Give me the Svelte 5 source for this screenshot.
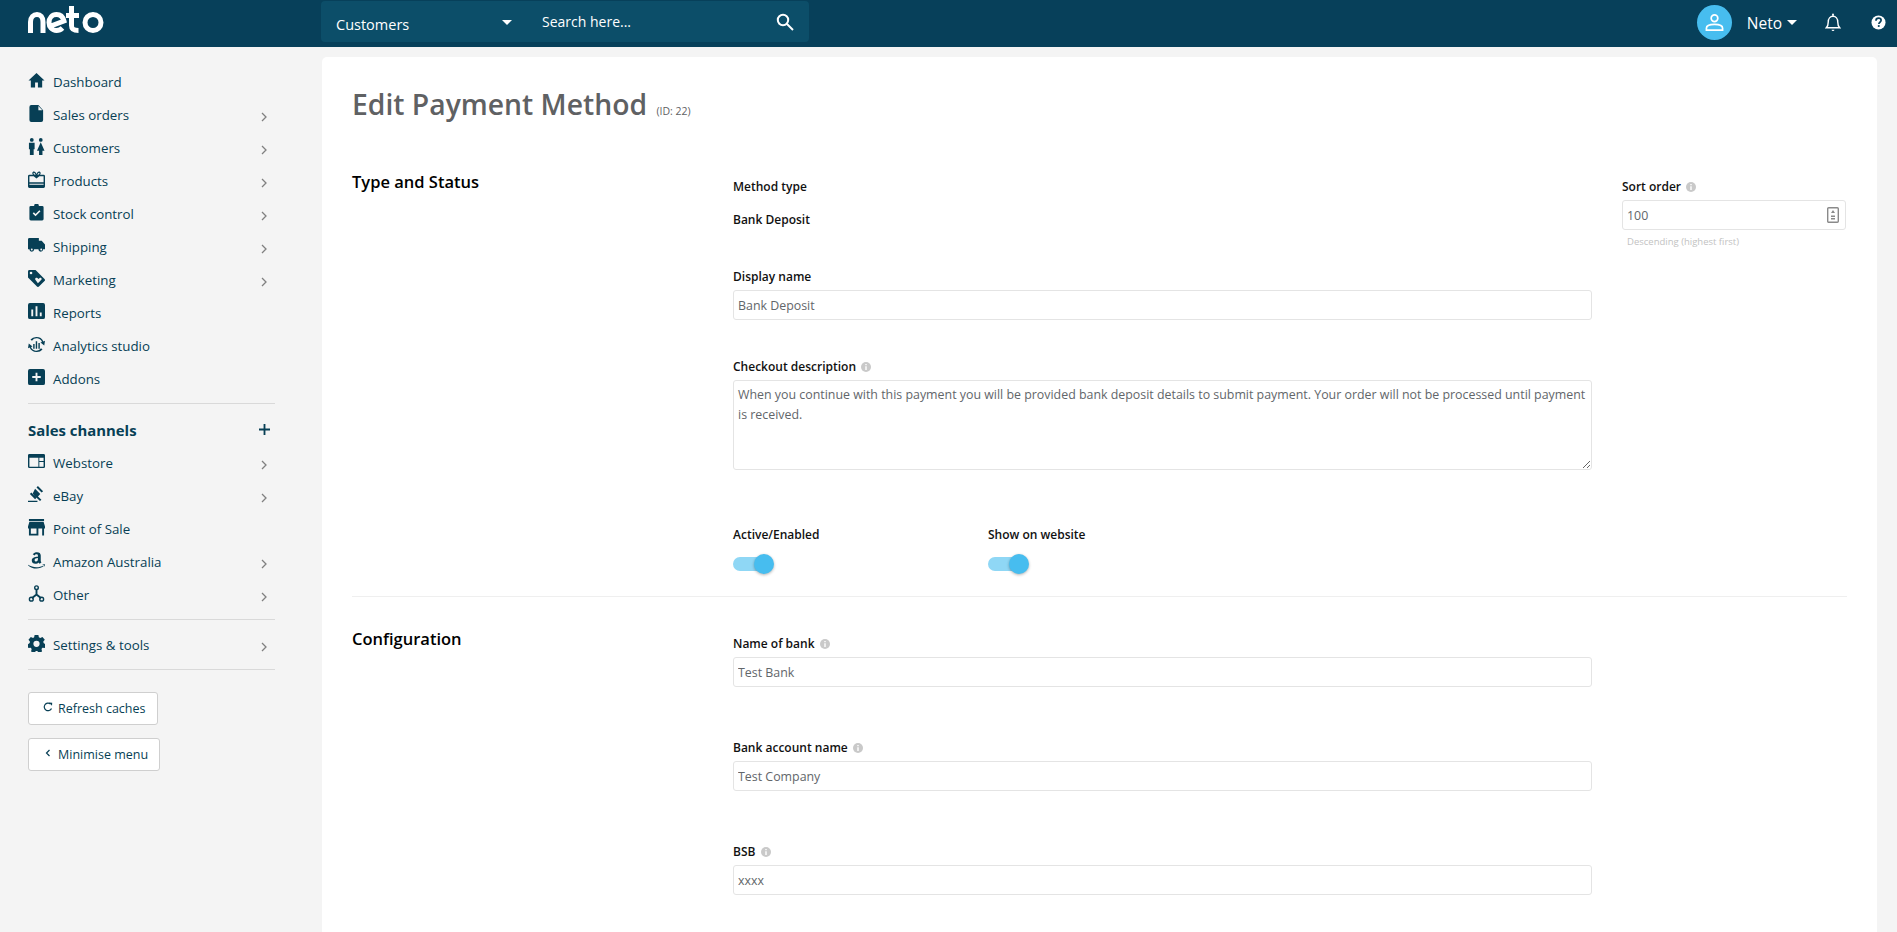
<script>
  const top = [
    { label: 'Dashboard', icon: 'home' },
    { label: 'Sales orders', icon: 'doc', more: true },
    { label: 'Customers', icon: 'people', more: true },
    { label: 'Products', icon: 'gift', more: true },
    { label: 'Stock control', icon: 'clip', more: true },
    { label: 'Shipping', icon: 'truck', more: true },
    { label: 'Marketing', icon: 'tag', more: true },
    { label: 'Reports', icon: 'bars' },
    { label: 'Analytics studio', icon: 'studio' },
    { label: 'Addons', icon: 'plus' }
  ];
  const channels = [
    { label: 'Webstore', icon: 'web', more: true },
    { label: 'eBay', icon: 'gavel', more: true },
    { label: 'Point of Sale', icon: 'store' },
    { label: 'Amazon Australia', icon: 'amazon', more: true },
    { label: 'Other', icon: 'nodes', more: true }
  ];
  const config = [
    { label: 'Name of bank', value: 'Test Bank' },
    { label: 'Bank account name', value: 'Test Company' },
    { label: 'BSB', value: 'xxxx' }
  ];
</script>

{#snippet icon(name)}
  <svg class="nav-icon" viewBox="0 0 18 18" aria-hidden="true">
    {#if name === 'home'}
      <path d="M9 1 0.5 9H3v7.5h4.5V11h3v5.5H15V9h2.5z" />
    {:else if name === 'doc'}
      <path d="M3.5 0H11l5 5.500V16a2 2 0 0 1-2 2H3.500a2 2 0 0 1-2-2V2a2 2 0 0 1 2-2zM11 1v4.500h4.200z" fill-rule="evenodd" />
    {:else if name === 'people'}
      <circle cx="4" cy="2" r="2" /><circle cx="13.500" cy="2" r="2" />
      <path d="M1 5h6v7H6v6H2v-6H1zM13.500 4.500l4 9h-2.200V18h-3.600v-4.500H9.500z" />
    {:else if name === 'gift'}
      <path fill-rule="evenodd" d="M1.500 4H5.500C4 3 4.500.5 6.200.5 7.500.5 8.500 2 9 3.200 9.500 2 10.500.5 11.800.500 13.500.5 14 3 12.500 4h4A1.500 1.500 0 0 1 18 5.500v11a1.500 1.500 0 0 1-1.500 1.500h-15A1.500 1.500 0 0 1 0 16.500v-11A1.500 1.500 0 0 1 1.500 4zM1.500 5.500V12h15V5.500H12L9 8 6 5.500zM1.500 13.500v1h15v-1zM6.300 1.800c-.6 0-.7 1.200.2 1.900L8 4C7.700 3 7 1.800 6.300 1.800zM11.700 1.800C11 1.800 10.300 3 10 4l1.500-.3c.9-.7.800-1.900.2-1.900z" />
    {:else if name === 'clip'}
      <path fill-rule="evenodd" d="M3 2h3.500a2.500 2.500 0 0 1 5 0H15a1.500 1.500 0 0 1 1.500 1.500V16a1.500 1.500 0 0 1-1.500 1.500H3A1.500 1.500 0 0 1 1.500 16V3.500A1.500 1.500 0 0 1 3 2zM5 10l1.200-1.200 1.800 1.800 4-4L13.200 7.800 8 13z" />
    {:else if name === 'truck'}
      <path d="M0 2.500A1.500 1.500 0 0 1 1.500 1h10v3h3l3.500 4v5h-2a2.500 2.500 0 0 1-5 0H6.500a2.500 2.500 0 0 1-5 0H0z" /><circle cx="4" cy="13.200" r="1" fill="#f4f4f4" /><circle cx="14" cy="13.200" r="1" fill="#f4f4f4" />
    {:else if name === 'tag'}
      <path fill-rule="evenodd" d="M0 1.500A1.500 1.500 0 0 1 1.500 0H8l9.500 9.500a1.500 1.500 0 0 1 0 2.100L11.600 17.500a1.500 1.500 0 0 1-2.100 0L0 8zM3.200 1.800a1.400 1.400 0 1 0 0 2.800 1.400 1.400 0 0 0 0-2.800zM10.500 14l3.600-3.600c1-1.100-.5-2.900-2-1.700L11 9.500l-1-.9C8.400 7.500 7 9.200 7.800 10.400z" />
    {:else if name === 'bars'}
      <path fill-rule="evenodd" d="M2 0h14a2 2 0 0 1 2 2v13a2 2 0 0 1-2 2H2a2 2 0 0 1-2-2V2a2 2 0 0 1 2-2zM3.500 7v7H5.500V7zM8 3.500V14h2V3.500zM12.500 10v4h2v-4z" />
    {:else if name === 'studio'}
      <path d="M9 1a8 8 0 0 1 7.300 4.700L18 5l-.8 5-4-3 1.600-.6A6 6 0 0 0 4.200 5L2.600 3.800A8 8 0 0 1 9 1zM9 17a8 8 0 0 1-7.300-4.700L0 13l.8-5 4 3-1.600.6A6 6 0 0 0 13.800 13l1.600 1.200A8 8 0 0 1 9 17z" /><path d="M5.500 8.500h1.500v5H5.500zM8.200 5.500h1.500v8H8.200zM11 7.500h1.500v6H11z" />
    {:else if name === 'plus'}
      <path fill-rule="evenodd" d="M2 0h14a2 2 0 0 1 2 2v13a2 2 0 0 1-2 2H2a2 2 0 0 1-2-2V2a2 2 0 0 1 2-2zM8 4v3.500H4.500v2H8V13h2V9.500h3.500v-2H10V4z" />
    {:else if name === 'web'}
      <path fill-rule="evenodd" d="M1.500 1h15A1.500 1.500 0 0 1 18 2.500v12a1.500 1.500 0 0 1-1.500 1.500h-15A1.500 1.500 0 0 1 0 14.500v-12A1.500 1.500 0 0 1 1.500 1zM1.500 5v9.500h9.500V5zM12 5v3.500h4.500V5zM12 9.500v5h4.500v-5z" />
    {:else if name === 'gavel'}
      <path d="M10.500 0l5.500 5.500-1.600 1.500-5.400-5.500zM7.500 3l5.500 5.500-2.500 2.500-1.800-1.700 5.500 5.200-1.500 1.500-5.500-5.300L5 8zM3.500 7l5.500 5.500-1.500 1.500L2 8.500zM0 15.500h10V17H0z" />
    {:else if name === 'store'}
      <path fill-rule="evenodd" d="M1 0h16v2H1zM1.500 3h15L18 8v2H17v7.500H1V10H0V8zM3 10v5.500h6V10zM11 10v7.500h4V10z" />
    {:else if name === 'amazon'}
      <path fill-rule="evenodd" d="M5 2.500C6 .8 8 .2 9.500.2c2.500 0 4 1.300 4 3.500v5.500c0 .8.300 1.200.8 1.700l-1.800 1.600c-.6-.5-1-1-1.300-1.500-.9 1.100-2 1.500-3.400 1.500-2.200 0-3.800-1.300-3.800-3.500 0-2.800 2.700-3.800 6.500-4V3.800c0-1-.6-1.500-1.600-1.500-.9 0-1.500.5-1.800 1.300zM10.500 6.300c-2.200.1-3.500.7-3.500 2.100 0 1 .6 1.600 1.500 1.600 1.400 0 2-1.200 2-2.500zM0 13.500c5 3.300 12 3.300 16.300.7l.5.4C13 18.500 4.500 18.800 0 14zM15 13.300c1-.4 2.500-.4 3 0 0 1-.6 2-1.300 2.600l.4-2.100z" />
    {:else if name === 'nodes'}
      <path fill="none" stroke="#073f55" stroke-width="2" d="M9 5v5L4 14M9 10l5 4" /><circle cx="9" cy="2.800" r="1.900" fill="none" stroke="#073f55" stroke-width="1.500" /><circle cx="3.500" cy="15" r="2" fill="none" stroke="#073f55" stroke-width="1.500" /><circle cx="14.500" cy="15" r="2" fill="none" stroke="#073f55" stroke-width="1.500" />
    {:else if name === 'gear'}
      <path fill-rule="evenodd" d="M7 0h4l.5 2.500 1.500.7L15.300 2l2.500 3-1.600 2 .3 1.500L18.700 10l-.8 3.800-2.600-.2-1 1.300.6 2.500-3.500 1.700-1.500-2.100H8.300l-1.600 2.100-3.500-1.700.7-2.500-1-1.300-2.600.2L-.5 10l2.300-1.500L2 7 .5 5 3 2l2.300 1.200 1.200-.7zM9 6a3.300 3.300 0 1 0 0 6.600A3.300 3.300 0 0 0 9 6z" />
    {/if}
  </svg>
{/snippet}

{#snippet navRow(item)}
  <li class="nav-row">
    {@render icon(item.icon)}
    <span class="nav-label">{item.label}</span>
    {#if item.more}
      <svg class="chev" viewBox="0 0 7 10"><path d="M1 1l4 4-4 4" /></svg>
    {/if}
  </li>
{/snippet}

{#snippet info()}
  <svg class="info" viewBox="0 0 10 10" aria-hidden="true">
    <circle cx="5" cy="5" r="5" fill="#c9c9c9" />
    <path d="M4.300 2h1.400v1.300H4.300zM4.300 4.200h1.400V8H4.300z" fill="#fff" />
  </svg>
{/snippet}

<div class="page">
  <header class="topbar">
    <svg class="logo" viewBox="0 0 78 28" aria-label="neto">
      <g fill="none" stroke="#fff" stroke-width="5">
        <path d="M2.500 27V16c0-5 3-7.500 6.500-7.500s6 2.500 6 7.500v11" />
        <path d="M21.500 20.500 36 15C35 11 32 8.500 28.500 8.500c-4.500 0-7.500 3.500-7.500 8s3 8 7.500 8c2.500 0 4.500-1 6-2.500" />
        <path d="M43.500 0v19.500c0 3.500 2 5 7 5M38 9.500h13" />
        <circle cx="65" cy="16.500" r="8" />
      </g>
    </svg>
    <div class="finder">
      <div class="scope">
        <span>Customers</span>
        <span class="caret"></span>
      </div>
      <div class="search">
        <span>Search here...</span>
        <svg class="search-icon" viewBox="0 0 18 18"><circle cx="7" cy="7" r="5.200" /><path d="M11 11l6 6" /></svg>
      </div>
    </div>
    <div class="account">
      <span class="avatar">
        <svg viewBox="0 0 20 20"><circle cx="10" cy="5.500" r="3.500" /><path d="M1.500 18v-2c0-2.500 3-4 8.500-4s8.500 1.500 8.500 4v2z" /></svg>
      </span>
      <span class="user">Neto</span>
      <span class="caret user-caret"></span>
      <svg class="bell" viewBox="0 0 16 20"><path d="M1 15.500c1.500-1.500 2-3 2-6 0-3.500 2-6 5-6s5 2.500 5 6c0 3 .5 4.500 2 6z" /><path class="solid" d="M6.500 17.500h3a1.500 1.500 0 0 1-3 0zM7 1.500a1 1 0 0 1 2 0V3H7z" /></svg>
      <svg class="help" viewBox="0 0 16 16"><circle cx="8" cy="8" r="7.500" fill="#fff" /><path d="M5.300 6c0-1.700 1.200-2.600 2.800-2.600s2.700.9 2.700 2.300c0 2-2.400 2-2.400 3.800" fill="none" stroke="#07405a" stroke-width="1.800" /><rect x="7.300" y="10.800" width="1.900" height="1.900" fill="#07405a" /></svg>
    </div>
  </header>

  <div class="body">
    <nav class="sidebar">
      <ul class="nav">
        {#each top as item}{@render navRow(item)}{/each}
      </ul>
      <hr />
      <div class="channels">
        <span>Sales channels</span>
        <svg class="add" viewBox="0 0 12 12"><path d="M6 0v12M0 6h12" /></svg>
      </div>
      <ul class="nav">
        {#each channels as item}{@render navRow(item)}{/each}
      </ul>
      <hr class="tight" />
      <ul class="nav">
        {@render navRow({ label: 'Settings & tools', icon: 'gear', more: true })}
      </ul>
      <hr class="tight" />
      <button class="side-btn first">
        <svg viewBox="0 0 10 10"><path d="M8.500 6.500A3.800 3.800 0 1 1 7.500 2" /><path class="solid" d="M6 .5l3.200.2L9 3.800z" /></svg>
        Refresh caches
      </button>
      <button class="side-btn">
        <svg viewBox="0 0 10 10"><path d="M6.500 2 3.500 5l3 3" /></svg>
        Minimise menu
      </button>
    </nav>

    <main class="card">
      <h1>Edit Payment Method <small>(ID: 22)</small></h1>

      <section class="section status">
        <h2>Type and Status</h2>
        <div class="fields">
          <p class="label">Method type</p>
          <p class="label static">Bank Deposit</p>
          <label class="label name-label" for="display">Display name</label>
          <input id="display" class="input" value="Bank Deposit" />
          <p class="label desc-label">Checkout description {@render info()}</p>
          <textarea class="input area" rows="3">When you continue with this payment you will be provided bank deposit details to submit payment. Your order will not be processed until payment is received.</textarea>
          <div class="toggles">
            <div class="toggle-field">
              <p class="label">Active/Enabled</p>
              <span class="toggle"><span class="knob"></span></span>
            </div>
            <div class="toggle-field">
              <p class="label">Show on website</p>
              <span class="toggle"><span class="knob"></span></span>
            </div>
          </div>
        </div>
        <aside class="sort">
          <p class="label">Sort order {@render info()}</p>
          <div class="input sort-input">
            <span>100</span>
            <svg viewBox="0 0 12 16"><rect x=".7" y=".7" width="10.600" height="14.600" rx="1" fill="none" stroke="#8a8a8a" stroke-width="1.400" /><path d="M6 3l2 3H4zM4 8.500h4V10H4zM4 11h4v1.500H4z" fill="#8a8a8a" /></svg>
          </div>
          <p class="hint">Descending (highest first)</p>
        </aside>
      </section>

      <section class="section config">
        <h2>Configuration</h2>
        <div class="fields">
          {#each config as field}
            <div class="config-field">
              <p class="label">{field.label} {@render info()}</p>
              <input class="input" value={field.value} />
            </div>
          {/each}
        </div>
      </section>
    </main>
  </div>
</div>

<style>
  :global(body) { margin: 0; background: #f4f4f4; }
  .page {
    height: 932px;
    overflow: hidden;
    font-family: "Open Sans", "Noto Sans", sans-serif;
    font-size: 13.300px;
    color: #073f55;
  }
  p, h1, h2, ul { margin: 0; padding: 0; }
  ul { list-style: none; }

  .topbar {
    height: 47px;
    background: #07405a;
    display: flex;
    align-items: flex-start;
    color: #fff;
  }
  .logo { width: 78px; height: 28px; margin: 6px 0 0 28px; flex: none; }
  .finder {
    margin-left: 215px;
    width: 488px;
    height: 41px;
    margin-top: 1px;
    background: #0c4e69;
    border-radius: 4px;
    display: flex;
    font-size: 14px;
  }
  .scope {
    width: 207px;
    box-sizing: border-box;
    display: flex;
    align-items: center;
    justify-content: space-between;
    padding: 5px 16px 0 15px;
    font-size: 14.500px;
  }
  .caret {
    width: 0;
    height: 0;
    border: 5px solid transparent;
    border-top: 5px solid #fff;
    border-bottom: 0;
  }
  .scope .caret { margin-top: -4px; }
  .search {
    flex: 1;
    display: flex;
    align-items: center;
    justify-content: space-between;
    padding: 0 15px 0 14px;
  }
  .search-icon { width: 18px; height: 18px; fill: none; stroke: #fff; stroke-width: 2; }
  .account { margin-left: auto; display: flex; align-items: center; height: 45px; }
  .avatar {
    width: 35px; height: 35px; border-radius: 50%;
    background: #47bdef;
    display: flex; align-items: center; justify-content: center;
  }
  .avatar svg { width: 19px; height: 19px; fill: none; stroke: #fff; stroke-width: 1.800; }
  .user { margin-left: 15px; font-size: 15.500px; }
  .user-caret { margin-left: 5px; }
  .bell { width: 16px; height: 19px; margin-left: 28px; fill: none; stroke: #fff; stroke-width: 1.500; }
  .bell .solid { fill: #fff; stroke: none; }
  .help { width: 15px; height: 15px; margin: 0 11px 0 30px; }

  .body { display: flex; align-items: flex-start; }
  .sidebar { width: 322px; flex: none; box-sizing: border-box; padding: 18px 47px 0 28px; display: flex; flex-direction: column; align-items: flex-start; }
  .nav { width: 100%; }
  .nav-row { height: 33px; display: flex; align-items: center; position: relative; }
  .nav-icon { width: 17px; height: 17px; fill: #073f55; flex: none; margin-top: -3px; }
  .nav-label { margin-left: 8px; }
  .chev { width: 7px; height: 10px; margin-left: auto; margin-right: 7px; margin-top: 5px; fill: none; stroke: #808080; stroke-width: 1.300; }
  hr { width: 100%; border: 0; border-top: 1px solid #d9d9d9; margin: 8px 0 0; }
  hr.tight { margin: 8px 0; }
  .channels {
    width: 100%;
    box-sizing: border-box;
    display: flex;
    justify-content: space-between;
    align-items: center;
    margin-top: 13px;
    height: 29px;
    padding-bottom: 4px;
    font-size: 14.900px;
    font-weight: 700;
  }
  .add { width: 11px; height: 11px; fill: none; stroke: #073f55; stroke-width: 2; margin-right: 5px; }
  .side-btn {
    height: 33px;
    box-sizing: border-box;
    background: #fff;
    border: 1px solid #cfcfcf;
    border-radius: 3px;
    padding: 0 11px 0 14px;
    font: inherit;
    font-size: 12.500px;
    color: #073f55;
    display: flex;
    align-items: center;
    gap: 5px;
    margin-bottom: 13px;
  }
  .side-btn.first { margin-top: 14px; }
  .side-btn svg { width: 10px; height: 10px; fill: none; stroke: #073f55; stroke-width: 1.200; margin-top: -4px; }
  .side-btn .solid { fill: #073f55; stroke: none; }

  .card {
    flex: 1;
    margin: 10px 20px 0 0;
    background: #fff;
    border-radius: 5px 5px 0 0;
    padding: 26px 30px 0 30px;
    height: 900px;
    box-sizing: border-box;
  }
  h1 { font-size: 28.300px; font-weight: 600; color: #5f6163; line-height: 42px; }
  h1 small { font-size: 10.500px; font-weight: 400; margin-left: 2px; }
  .section { display: flex; align-items: flex-start; }
  .status { margin-top: 37px; padding-bottom: 25px; border-bottom: 1px solid #efefef; }
  .config { margin-top: 29px; }
  h2 { width: 381px; flex: none; font-size: 16.500px; font-weight: 600; color: #000; line-height: 26px; }
  .fields { width: 859px; flex: none; margin-top: 10px; }
  .label { font-size: 12px; font-weight: 600; color: #111; line-height: 16px; display: block; }
  .info { width: 10px; height: 10px; margin-left: 2px; vertical-align: -1px; }
  .static { margin-top: 17px; }
  .name-label { margin-top: 41px; }
  .input {
    display: block;
    width: 100%;
    height: 30px;
    box-sizing: border-box;
    margin: 5px 0 0;
    padding: 0 4px;
    border: 1px solid #e4e4e4;
    border-radius: 3px;
    font: inherit;
    font-size: 12.400px;
    color: #62666a;
    background: #fff;
  }
  .desc-label { margin-top: 39px; }
  .area {
    height: 90px;
    padding: 4px;
    line-height: 20px;
    resize: both;
  }
  .toggles { display: flex; margin-top: 57px; }
  .toggle-field { width: 255px; }
  .toggle { display: block; position: relative; width: 33px; height: 14px; margin-top: 14px; background: #8fd7f5; border-radius: 7px; }
  .knob { position: absolute; right: -8px; top: -3px; width: 20px; height: 20px; background: #47bdef; border-radius: 50%; box-shadow: 0 1px 3px rgba(0,0,0,.3); }
  .sort { width: 224px; margin: 10px 0 0 30px; flex: none; }
  .sort-input { display: flex; align-items: center; justify-content: space-between; padding-right: 6px; }
  .sort-input svg { width: 12px; height: 16px; }
  .hint { font-size: 9.500px; color: #c2c2c2; margin: 5px 0 0 5px; }
  .config-field { margin-bottom: 53px; }
</style>
